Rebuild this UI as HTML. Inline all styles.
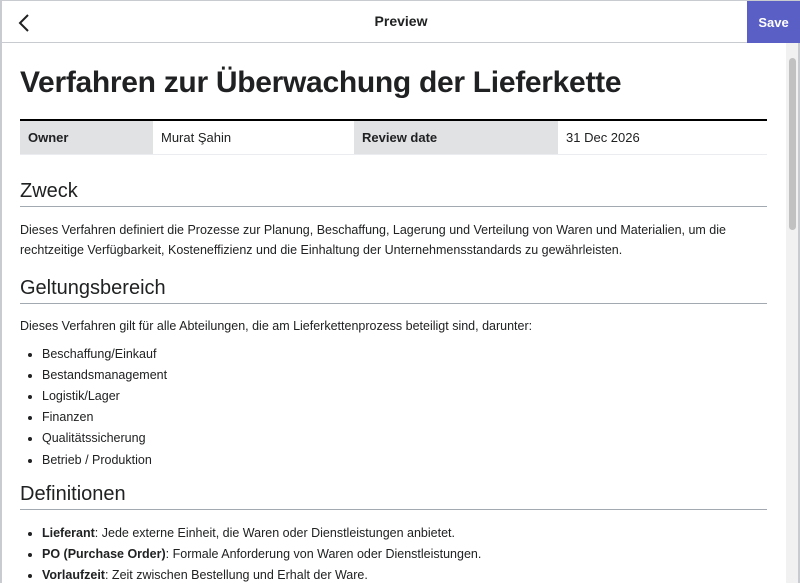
<!DOCTYPE html>
<html><head><meta charset="utf-8"><style>
*{margin:0;padding:0;box-sizing:border-box}
body{width:800px;height:583px;overflow:hidden;background:#fff;font-family:"Liberation Sans",sans-serif;color:#202122;position:relative}
.frame{position:absolute;left:0;top:0;width:800px;height:583px;border:2px solid #c8ccd1;border-top:1px solid #c8ccd1;border-bottom:none}
.hdr{position:absolute;left:2px;top:1px;right:0;height:42px;border-bottom:1px solid #c8ccd1;background:#fff}
.hdr .t{position:absolute;left:0;right:0;top:12px;text-align:center;font-size:14px;font-weight:bold;color:#202122}
.save{position:absolute;right:0;top:0;width:53px;height:42px;background:#5a5fc6;color:#fff;font-weight:bold;font-size:13px;text-align:center;line-height:44px}
.sb{position:absolute;left:786px;top:43px;width:12px;bottom:0;background:#f1f1f1}
.thumb{position:absolute;left:789px;top:58px;width:7px;height:172px;background:#c1c1c1;border-radius:4px}
.c{position:absolute;left:20px;top:43px;width:747px}
h1{font-size:30px;font-weight:bold;margin-top:23px;letter-spacing:-0.3px;color:#202122}
table{width:100%;border-collapse:collapse;border-top:2px solid #000;margin-top:19px;font-size:13px}
td{height:34px;padding:0 8px;border-bottom:1px solid #eaecf0}
td.l{background:#e1e2e4;font-weight:bold}
h2{font-size:20px;font-weight:normal;border-bottom:1px solid #a2a9b1;padding-bottom:3px;margin-top:22px;margin-bottom:14px}
p{font-size:12.5px;line-height:20px}
ul{margin-left:22px;margin-top:8px;font-size:12.5px;line-height:21.2px}
</style></head><body>
<div class="frame"></div>
<div class="hdr"><svg style="position:absolute;left:15px;top:12px" width="14" height="20"><path d="M11 2 L3 10 L11 18" stroke="#202122" stroke-width="2" fill="none"/></svg><div class="t">Preview</div><div class="save">Save</div></div>
<div class="sb"></div><div class="thumb"></div>
<div class="c">
<h1>Verfahren zur Überwachung der Lieferkette</h1>
<table><tr><td class="l" style="width:133px">Owner</td><td style="width:201px">Murat Şahin</td><td class="l" style="width:204px">Review date</td><td>31 Dec 2026</td></tr></table>
<h2 style="margin-top:25px;margin-bottom:13px">Zweck</h2>
<p>Dieses Verfahren definiert die Prozesse zur Planung, Beschaffung, Lagerung und Verteilung von Waren und Materialien, um die rechtzeitige Verfügbarkeit, Kosteneffizienz und die Einhaltung der Unternehmensstandards zu gewährleisten.</p>
<h2 style="margin-top:17px;margin-bottom:12px">Geltungsbereich</h2>
<p>Dieses Verfahren gilt für alle Abteilungen, die am Lieferkettenprozess beteiligt sind, darunter:</p>
<ul style="margin-top:8px"><li>Beschaffung/Einkauf</li><li>Bestandsmanagement</li><li>Logistik/Lager</li><li>Finanzen</li><li>Qualitätssicherung</li><li>Betrieb / Produktion</li></ul>
<h2 style="margin-top:12px;margin-bottom:13px">Definitionen</h2>
<ul style="margin-top:0"><li><b>Lieferant</b>: Jede externe Einheit, die Waren oder Dienstleistungen anbietet.</li><li><b>PO (Purchase Order)</b>: Formale Anforderung von Waren oder Dienstleistungen.</li><li><b>Vorlaufzeit</b>: Zeit zwischen Bestellung und Erhalt der Ware.</li></ul>
</div>
</body></html>
